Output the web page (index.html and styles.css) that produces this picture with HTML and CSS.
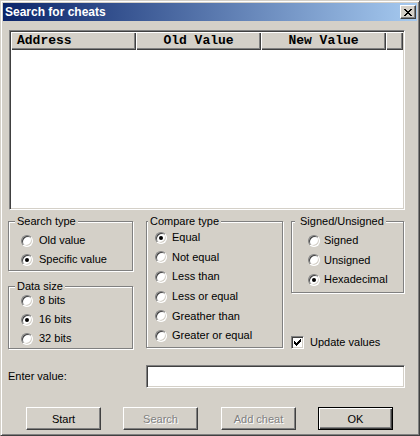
FILE: index.html
```html
<!DOCTYPE html>
<html>
<head>
<meta charset="utf-8">
<link rel="stylesheet" href="styles.css">
</head>
<body>
<div class="window">
  <div class="titlebar">
    <span class="title">Search for cheats</span>
    <button class="close" type="button">
      <svg width="8" height="7" viewBox="0 0 8 7" shape-rendering="crispEdges"><path fill="#000" d="M0 0h2v1H0z M6 0h2v1H6z M1 1h2v1H1z M5 1h2v1H5z M2 2h4v1H2z M3 3h2v1H3z M2 4h4v1H2z M1 5h2v1H1z M5 5h2v1H5z M0 6h2v1H0z M6 6h2v1H6z"/></svg>
    </button>
  </div>

  <div class="list">
    <div class="header">
      <div class="hcell hc-addr">Address</div>
      <div class="hcell hc-mid">Old Value</div>
      <div class="hcell hc-mid">New Value</div>
      <div class="hcell hc-rest"></div>
    </div>
  </div>

  <div class="options">
    <div class="col-a">
      <div class="group g-search">
        <span class="legend">Search type</span>
        <div class="opt"><span class="radio"></span><span class="lbl">Old value</span></div>
        <div class="opt"><span class="radio on"></span><span class="lbl">Specific value</span></div>
      </div>
      <div class="group g-size">
        <span class="legend">Data size</span>
        <div class="opt"><span class="radio"></span><span class="lbl">8 bits</span></div>
        <div class="opt"><span class="radio on"></span><span class="lbl">16 bits</span></div>
        <div class="opt"><span class="radio"></span><span class="lbl">32 bits</span></div>
      </div>
    </div>

    <div class="group g-compare">
      <span class="legend">Compare type</span>
      <div class="opt"><span class="radio on"></span><span class="lbl">Equal</span></div>
      <div class="opt"><span class="radio"></span><span class="lbl">Not equal</span></div>
      <div class="opt"><span class="radio"></span><span class="lbl">Less than</span></div>
      <div class="opt"><span class="radio"></span><span class="lbl">Less or equal</span></div>
      <div class="opt"><span class="radio"></span><span class="lbl">Greather than</span></div>
      <div class="opt"><span class="radio"></span><span class="lbl">Greater or equal</span></div>
    </div>

    <div class="col-c">
      <div class="group g-sign">
        <span class="legend">Signed/Unsigned</span>
        <div class="opt"><span class="radio"></span><span class="lbl">Signed</span></div>
        <div class="opt"><span class="radio"></span><span class="lbl">Unsigned</span></div>
        <div class="opt"><span class="radio on"></span><span class="lbl">Hexadecimal</span></div>
      </div>
      <div class="check">
        <span class="checkbox">
          <svg width="7" height="7" viewBox="0 0 7 7" shape-rendering="crispEdges"><path fill="#000" d="M6 0h1v1H6z M5 1h2v1H5z M0 2h1v1H0z M4 2h3v1H4z M0 3h2v1H0z M3 3h3v1H3z M0 4h5v1H0z M1 5h3v1H1z M2 6h1v1H2z"/></svg>
        </span>
        <span class="lbl">Update values</span>
      </div>
    </div>
  </div>

  <div class="value-row">
    <span class="value-label">Enter value:</span>
    <div class="textbox"></div>
  </div>

  <div class="buttons">
    <button class="btn" type="button">Start</button>
    <button class="btn disabled" type="button">Search</button>
    <button class="btn disabled btn-add" type="button">Add cheat</button>
    <button class="btn default" type="button">OK</button>
  </div>
</div>
</body>
</html>
```

FILE: styles.css
```css
html, body {
  margin: 0;
  padding: 0;
  background: #d4d0c8;
}
body {
  font-family: "Liberation Sans", Arial, sans-serif;
  font-size: 11px;
  color: #000;
}
.window {
  width: 420px;
  height: 436px;
  box-sizing: border-box;
  border: 1px solid;
  border-color: #d4d0c8 #404040 #404040 #d4d0c8;
  box-shadow: inset 1px 1px 0 #fff, inset -1px -1px 0 #808080;
  padding: 2px;
  background: #d4d0c8;
}
.titlebar {
  height: 18px;
  display: flex;
  align-items: center;
  justify-content: space-between;
  padding: 0 1px 0 2px;
  background: linear-gradient(to right, #0a246a, #a6caf0);
  color: #fff;
}
.title {
  font-weight: bold;
  font-size: 12px;
  line-height: 13px;
}
.close {
  width: 16px;
  height: 14px;
  padding: 0;
  margin: 0;
  box-sizing: border-box;
  border: 1px solid;
  border-color: #fff #404040 #404040 #fff;
  box-shadow: inset -1px -1px 0 #808080;
  background: #d4d0c8;
  display: flex;
  align-items: center;
  justify-content: center;
}
.close svg { display: block; }

.list {
  margin: 9px 0 0 6px;
  width: 396px;
  height: 180px;
  box-sizing: border-box;
  border: 1px solid;
  border-color: #808080 #fff #fff #808080;
  box-shadow: inset 1px 1px 0 #404040, inset -1px -1px 0 #d4d0c8;
  padding: 1px;
  background: #fff;
}
.header {
  display: flex;
  height: 18px;
}
.hcell {
  box-sizing: border-box;
  height: 18px;
  background: #d4d0c8;
  box-shadow: inset 1px 1px 0 #fff, inset -1px -1px 0 #404040, inset -2px -2px 0 #808080;
  font-family: "Liberation Mono", "DejaVu Sans Mono", monospace;
  font-weight: bold;
  font-size: 13px;
  line-height: 18px;
  white-space: nowrap;
}
.hc-addr { width: 125px; padding-left: 6px; }
.hc-mid { width: 125px; text-align: center; }
.hc-rest { flex: 1; }

.options {
  display: flex;
  align-items: flex-start;
  margin-top: 11px;
  padding-left: 5px;
}
.col-a { width: 125px; display: flex; flex-direction: column; }
.col-c { margin-left: 8px; width: 113px; display: flex; flex-direction: column; }

.group {
  position: relative;
  box-sizing: border-box;
  border: 1px solid #808080;
  box-shadow: inset 1px 1px 0 #fff, 1px 1px 0 #fff;
}
.legend {
  position: absolute;
  top: -7px;
  left: 6px;
  padding: 0 2px;
  background: #d4d0c8;
  line-height: 13px;
  white-space: nowrap;
}
.opt {
  display: flex;
  align-items: center;
  height: 19px;
  white-space: nowrap;
}
.lbl { line-height: 13px; }

.g-search { height: 50px; padding: 9px 0 0 12px; }
.g-size { height: 63px; margin-top: 15px; padding: 4px 0 0 12px; }
.g-search .lbl, .g-size .lbl { margin-left: 6px; }

.g-compare { margin-left: 13px; width: 137px; height: 127px; padding: 6px 0 0 8px; }
.g-compare .legend { left: 1px; }
.g-compare .opt { height: 19.6px; }
.g-compare .lbl { margin-left: 5px; }

.g-sign { width: 113px; height: 72px; padding: 9px 0 0 16px; }
.g-sign .legend { left: 3px; padding-left: 5px; }
.g-sign .opt { height: 19.5px; }
.g-sign .lbl { margin-left: 4px; }

.radio {
  position: relative;
  flex: none;
  width: 12px;
  height: 12px;
  box-sizing: border-box;
  border-radius: 50%;
  border: 1px solid;
  border-color: #808080 #fff #fff #808080;
  box-shadow: inset 1px 1px 0 #404040, inset -1px -1px 0 #d4d0c8;
  background: #fff;
}
.radio.on::after {
  content: "";
  position: absolute;
  left: 3px;
  top: 3px;
  width: 4px;
  height: 4px;
  border-radius: 50%;
  background: #000;
}

.check {
  display: flex;
  align-items: center;
  margin-top: 43px;
  white-space: nowrap;
}
.checkbox {
  flex: none;
  width: 13px;
  height: 13px;
  box-sizing: border-box;
  border: 1px solid;
  border-color: #808080 #fff #fff #808080;
  box-shadow: inset 1px 1px 0 #404040, inset -1px -1px 0 #d4d0c8;
  background: #fff;
  display: flex;
  align-items: center;
  justify-content: center;
}
.checkbox svg { display: block; }
.check .lbl { margin-left: 6px; }

.value-row {
  display: flex;
  align-items: center;
  margin-top: 16px;
  padding-left: 5px;
}
.value-label {
  width: 138px;
  line-height: 13px;
}
.textbox {
  width: 259px;
  height: 23px;
  box-sizing: border-box;
  border: 1px solid;
  border-color: #808080 #fff #fff #808080;
  box-shadow: inset 1px 1px 0 #404040, inset -1px -1px 0 #d4d0c8;
  background: #fff;
}

.buttons {
  display: flex;
  gap: 22px;
  margin-top: 19px;
  padding-left: 23px;
}
.btn {
  width: 75px;
  height: 23px;
  margin: 0;
  padding: 0;
  box-sizing: border-box;
  border: 1px solid;
  border-color: #fff #404040 #404040 #fff;
  box-shadow: inset -1px -1px 0 #808080;
  background: #d4d0c8;
  font-family: "Liberation Sans", Arial, sans-serif;
  font-size: 11px;
  color: #000;
}
.btn-add { margin-left: 1px; }
.btn.disabled {
  color: #808080;
  text-shadow: 1px 1px 0 #fff;
}
.btn.default {
  border-color: #000;
  box-shadow: inset 1px 1px 0 #fff, inset -1px -1px 0 #404040, inset -2px -2px 0 #808080;
}
```
